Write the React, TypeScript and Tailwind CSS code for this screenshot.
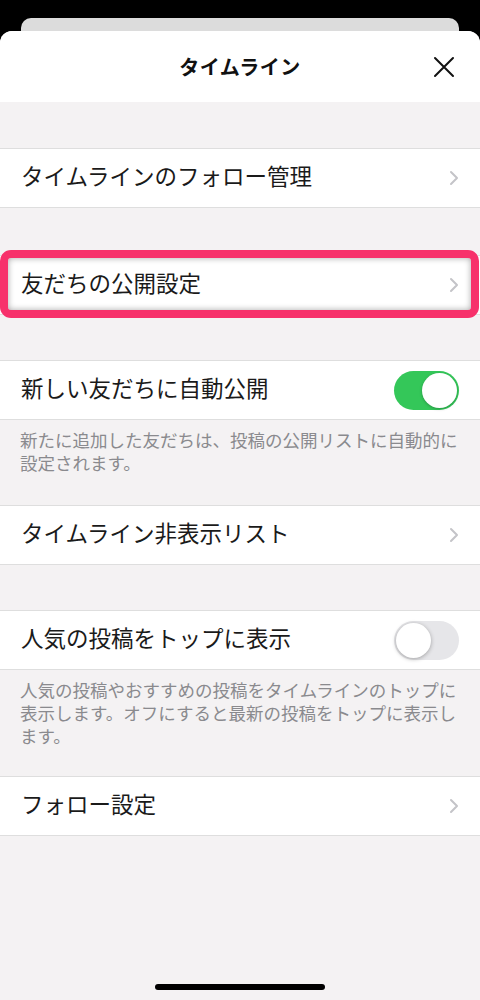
import React from 'react';

const font = { fontFamily: '"Noto Sans CJK JP", "Noto Sans", sans-serif' };

const Chevron = () => (
  <svg width="10" height="16" viewBox="0 0 10 16" fill="none" className="shrink-0">
    <polyline points="2,2 8,8 2,14" stroke="#c4c4c8" strokeWidth="2" strokeLinecap="round" strokeLinejoin="round" />
  </svg>
);

const Toggle: React.FC<{ on: boolean }> = ({ on }) =>
  on ? (
    <div className="w-[65px] h-[39px] rounded-full bg-[#34c759] p-[2px] flex justify-end shrink-0">
      <div className="w-[35px] h-[35px] rounded-full bg-white shadow-[0_1px_3px_rgba(0,0,0,0.25)]" />
    </div>
  ) : (
    <div className="w-[65px] h-[39px] rounded-full bg-[#e6e6e9] p-[2px] flex justify-start shrink-0">
      <div className="w-[35px] h-[35px] rounded-full bg-white shadow-[0_1px_4px_rgba(0,0,0,0.3)]" />
    </div>
  );

const Row: React.FC<{ label: string; right: React.ReactNode; highlight?: boolean }> = ({ label, right, highlight }) => (
  <div className="relative h-[60px] bg-white border-y border-[#dedede] flex items-center justify-between pl-[21px] pr-[21px]">
    <span className="text-[22.5px] text-[#1a1a1a] leading-none mb-[5px]">{label}</span>
    {right}
    {highlight && (
      <div className="absolute left-0 right-[1px] top-[-6px] bottom-[-4px] border-[8px] border-[#f7316b] rounded-[11px] shadow-[inset_0_0_6px_rgba(0,0,0,0.35)] pointer-events-none" />
    )}
  </div>
);

const Note: React.FC<{ children: React.ReactNode; className?: string }> = ({ children, className }) => (
  <p className={`px-[20px] text-[17.5px] leading-[23px] text-[#8a8a8e] ${className ?? ''}`}>{children}</p>
);

export default function App() {
  return (
    <div className="min-h-screen bg-black flex flex-col" style={font}>
      <div className="h-[18px]" />
      <div className="mx-[21px] h-[13px] rounded-t-[10px] bg-[#dcdcdc]" />
      <div className="flex-1 flex flex-col rounded-t-[12px] overflow-hidden bg-[#f4f2f3]">
        <header className="relative h-[71px] bg-white flex items-center justify-center">
          <h1 className="text-[20px] font-bold text-[#111] tracking-[0.5px]">タイムライン</h1>
          <button className="absolute right-[25px] top-1/2 -translate-y-1/2">
            <svg width="22" height="22" viewBox="0 0 22 22" fill="none">
              <path d="M2 2L20 20M20 2L2 20" stroke="#111" strokeWidth="2" strokeLinecap="round" />
            </svg>
          </button>
        </header>

        <div className="mt-[46px]">
          <Row label="タイムラインのフォロー管理" right={<Chevron />} />
        </div>
        <div className="mt-[47px]">
          <Row label="友だちの公開設定" right={<Chevron />} highlight />
        </div>
        <div className="mt-[45px]">
          <Row label="新しい友だちに自動公開" right={<Toggle on />} />
          <Note className="pt-[8px] pb-[31px]">新たに追加した友だちは、投稿の公開リストに自動的に設定されます。</Note>
          <Row label="タイムライン非表示リスト" right={<Chevron />} />
        </div>
        <div className="mt-[45px]">
          <Row label="人気の投稿をトップに表示" right={<Toggle on={false} />} />
          <Note className="pt-[8px] pb-[29px]">人気の投稿やおすすめの投稿をタイムラインのトップに表示します。オフにすると最新の投稿をトップに表示します。</Note>
          <Row label="フォロー設定" right={<Chevron />} />
        </div>

        <div className="flex-1" />
        <div className="flex justify-center pb-[10px]">
          <div className="w-[170px] h-[6px] rounded-full bg-black" />
        </div>
      </div>
    </div>
  );
}
